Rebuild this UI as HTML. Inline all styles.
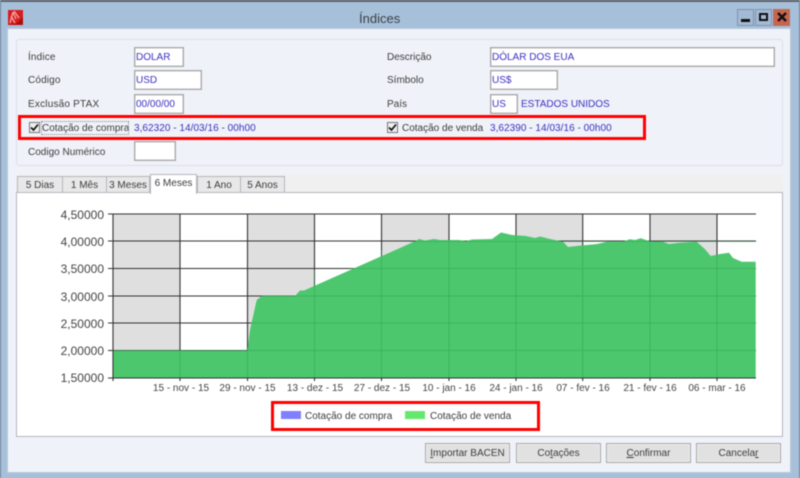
<!DOCTYPE html>
<html lang="pt"><head><meta charset="utf-8"><title>Índices</title>
<style>
html,body{margin:0;padding:0;background:#a7c0da}
#w{position:relative;width:800px;height:478px;overflow:hidden;background:#a7c0da;font-family:"Liberation Sans",sans-serif;font-size:10px;color:#3c3c3c;filter:blur(.4px)}
#w div{position:absolute;box-sizing:border-box}
.t{white-space:nowrap;line-height:12px}
.b{color:#3a30c0}
.i{background:#fff;border:1px solid #a9a9a9;box-shadow:inset 0 0 0 .5px #bbb;color:#3a30c0;padding-left:1px;line-height:19px;white-space:nowrap}
.red{border:3px solid #f00}
.tab{background:#e8e8e8;border:1px solid #b5b5bd;border-bottom:0;text-align:center;line-height:18px}
.btn{top:443px;height:20px;width:85px;background:#e1e1e1;border:1px solid #a8a8a8;box-shadow:inset 0 0 0 1px #ececec;text-align:center;line-height:19px}
.wb{top:9px;width:17px;height:17px;border:1px solid #7f93ab;background:#a3bad4}
</style></head><body><div id="w">
<div style="left:0;top:0;width:800px;height:2px;background:#5b6068"></div>
<div style="left:0;top:0;width:1px;height:478px;background:#6f8094"></div>
<div style="left:799px;top:0;width:1px;height:478px;background:#6f8094"></div>
<div style="left:7px;top:28px;width:784px;height:445px;background:#f0f2f9;border:1px solid #b8c8da"></div>
<svg style="position:absolute;left:8px;top:10px" width="15" height="15" viewBox="0 0 15 15"><rect width="15" height="15" fill="#d81c1c"/><path d="M0 15L15 15L15 7L9 13Z" fill="#b00c0c"/><path d="M2 13L5 2M5 2L8 9M6 1L11 8M3 6L7 13" stroke="#f6a8a8" stroke-width="1.300" fill="none"/></svg>
<div class="t" style="left:359px;top:11px;font-size:13px;line-height:16px;color:#3b4048">Índices</div>
<div class="wb" style="left:737px"><div style="left:3px;top:9px;width:9px;height:3px;background:#111"></div></div>
<div class="wb" style="left:755px"><div style="left:3px;top:3px;width:9px;height:8px;border:2px solid #111"></div></div>
<div class="wb" style="left:773px;background:#c9644e;border-color:#b5705f;width:17px"><svg style="position:absolute;left:3px;top:2px" width="10" height="10" viewBox="0 0 10 10"><path d="M1 1L9 9M9 1L1 9" stroke="#111" stroke-width="2.400"/></svg></div>

<div style="left:16px;top:39px;width:767px;height:127px;border:1px solid #dcdfe8;border-radius:3px"></div>
<div class="t" style="left:28px;top:52px;letter-spacing:.15px">Índice</div>
<div class="t" style="left:28px;top:75px;letter-spacing:.15px">Código</div>
<div class="t" style="left:28px;top:99px;letter-spacing:.2px">Exclusão PTAX</div>
<div class="t" style="left:28px;top:147px">Codigo Numérico</div>
<div class="i" style="left:134px;top:47px;width:50px;height:20px">DOLAR</div>
<div class="i" style="left:134px;top:70px;width:68px;height:20px">USD</div>
<div class="i" style="left:134px;top:94px;width:50px;height:20px">00/00/00</div>
<div class="i" style="left:134px;top:141px;width:42px;height:20px"></div>
<div class="t" style="left:387px;top:52px">Descrição</div>
<div class="t" style="left:387px;top:75px">Símbolo</div>
<div class="t" style="left:387px;top:99px">País</div>
<div class="i" style="left:490px;top:47px;width:285px;height:20px">DÓLAR DOS EUA</div>
<div class="i" style="left:490px;top:70px;width:68px;height:20px">US$</div>
<div class="i" style="left:490px;top:94px;width:28px;height:20px">US</div>
<div class="t b" style="left:521px;top:99px">ESTADOS UNIDOS</div>

<div class="red" style="left:18px;top:115px;width:628px;height:25px"></div>
<div style="left:29px;top:122px;width:11px;height:11px;background:#eee;border:1px solid #777"><svg style="position:absolute;left:0;top:0" width="9" height="9" viewBox="0 0 9 9"><path d="M1 4.500L3.500 7L8 1.500" fill="none" stroke="#111" stroke-width="1.700"/></svg></div>
<div class="t" style="left:42px;top:122px;outline:1px dotted #888;width:86px;height:12px;line-height:13px">Cotação de compra</div>
<div class="t b" style="left:134px;top:122px;line-height:13px;letter-spacing:.04px">3,62320 - 14/03/16 - 00h00</div>
<div style="left:387px;top:122px;width:11px;height:11px;background:#eee;border:1px solid #777"><svg style="position:absolute;left:0;top:0" width="9" height="9" viewBox="0 0 9 9"><path d="M1 4.500L3.500 7L8 1.500" fill="none" stroke="#111" stroke-width="1.700"/></svg></div>
<div class="t" style="left:402px;top:122px;line-height:13px">Cotação de venda</div>
<div class="t b" style="left:490px;top:122px;line-height:13px;letter-spacing:.04px">3,62390 - 14/03/16 - 00h00</div>

<div style="left:16px;top:174px;width:767px;height:19px;background:#f0f0f0"></div>
<div class="tab" style="left:17px;top:176px;width:46px;height:17px">5 Dias</div>
<div class="tab" style="left:62px;top:176px;width:45px;height:17px">1 Mês</div>
<div class="tab" style="left:106px;top:176px;width:44px;height:17px">3 Meses</div>
<div class="tab" style="left:240px;top:176px;width:45px;height:17px">5 Anos</div>
<div class="tab" style="left:197px;top:176px;width:44px;height:17px">1 Ano</div>
<div style="left:16px;top:192px;width:767px;height:245px;background:#fff;border:1px solid #b5b5bd"></div>
<div class="tab" style="left:150px;top:174px;width:47px;height:20px;background:#fff;line-height:18px;z-index:2">6 Meses</div>

<svg style="position:absolute;left:0;top:0" width="800" height="478" viewBox="0 0 800 478">
<g fill="#dfdfdf"><rect x="113" y="214" width="67" height="164"/><rect x="247.500" y="214" width="67" height="164"/><rect x="381.500" y="214" width="67.500" height="164"/><rect x="516" y="214" width="66.700" height="164"/><rect x="650" y="214" width="67" height="164"/></g>
<g stroke="#333" stroke-width="1.100" fill="none">
<path d="M108 214H756M108 241H756M108 268.500H756M108 296H756M108 323H756M108 350.500H756M108 378H756"/>
<path d="M113 214V381M180 214V381M247.500 214V381M314.500 214V381M381.500 214V381M449 214V381M516 214V381M582.700 214V381M650 214V381M717 214V381"/>
</g>
<path fill="#4cc76d" d="M113 350.700H247.300L250 330L256.700 300L261.700 296H295L300 290.500L304 290.500L400 248L416 240.700L419 239L425 240.500L434 239L440 240H459L466 241L472 239.500L492 239L501 232.500L512 235L526 236L535 238L540 236.500L550 239L563 241.600L568 247L580 245.600L597 244L607 241.700H622L630 239.300L635 240L640.700 238.300L650 241.300L663 241.700L669 244L680 242.700L696.700 241.700L705 249.300L710.700 256L720 254L729 252.700L733 258L741.700 261.700H755.700V378H113Z"/>
<g stroke="#2f9c50" stroke-width="1" fill="none" opacity=".45">
<path d="M180 351V378M247.500 351V378M314.500 270V378M381.500 250V378M449 240V378M516 236V378M582.700 246V378M650 241V378M717 255V378"/>
<path d="M113 350.500H756M250 323H756M262 296H756M350 268.500H756M410 241.500H756"/>
</g>
<path d="M113 378H756" stroke="#333" stroke-width="1"/>
<path d="M113 214V378" stroke="#333" stroke-width="1"/>
<g font-family="Liberation Sans,sans-serif" fill="#444">
<g font-size="12" text-anchor="end">
<text x="104" y="219">4,50000</text><text x="104" y="246">4,00000</text><text x="104" y="273">3,50000</text><text x="104" y="301">3,00000</text><text x="104" y="328">2,50000</text><text x="104" y="355">2,00000</text><text x="104" y="382">1,50000</text></g>
<g font-size="10" text-anchor="middle">
<text x="181" y="391">15 - nov - 15</text><text x="247.500" y="391">29 - nov - 15</text><text x="315" y="391">13 - dez - 15</text><text x="382" y="391">27 - dez - 15</text><text x="449" y="391">10 - jan - 16</text><text x="516" y="391">24 - jan - 16</text><text x="583" y="391">07 - fev - 16</text><text x="650" y="391">21 - fev - 16</text><text x="717" y="391">06 - mar - 16</text></g>
</g>
</svg>

<div class="red" style="left:271px;top:401px;width:269px;height:30px"></div>
<div style="left:281px;top:411px;width:20px;height:8px;background:#8080ff"></div>
<div class="t" style="left:305px;top:410px;line-height:13px">Cotação de compra</div>
<div style="left:405px;top:411px;width:20px;height:8px;background:#66e86e"></div>
<div class="t" style="left:430px;top:410px;line-height:13px">Cotação de venda</div>

<div class="btn" style="left:425px"><u>I</u>mportar BACEN</div>
<div class="btn" style="left:516px">Co<u>t</u>ações</div>
<div class="btn" style="left:606px"><u>C</u>onfirmar</div>
<div class="btn" style="left:696px">Cancela<u>r</u></div>
</div></body></html>
